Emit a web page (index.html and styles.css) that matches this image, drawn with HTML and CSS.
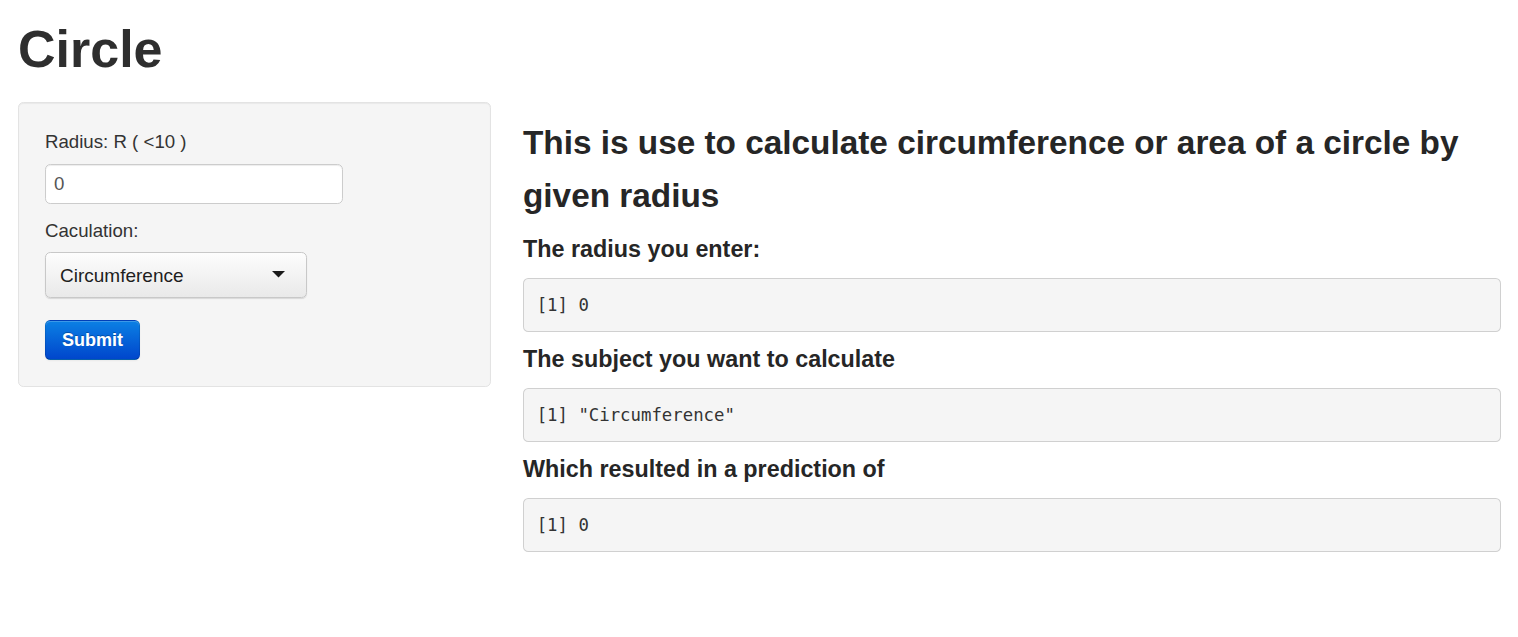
FILE: index.html
```html
<!DOCTYPE html>
<html lang="en">
<head>
<meta charset="utf-8">
<title>Circle</title>
<link rel="stylesheet" href="styles.css">
</head>
<body>
<div class="page">
  <header class="header">
    <h1 class="title">Circle</h1>
  </header>
  <div class="row">
    <form class="well">
      <label class="label" for="radius">Radius: R ( &lt;10 )</label>
      <input class="text-input" id="radius" type="text" value="0">
      <label class="label" for="calc">Caculation:</label>
      <div class="select-wrap">
        <select class="select" id="calc">
          <option>Circumference</option>
          <option>Area</option>
        </select>
        <svg class="caret" width="13" height="7" viewBox="0 0 13 7" aria-hidden="true"><polygon points="0,0 13,0 6.5,6.5" fill="#1a1a1a"/></svg>
      </div>
      <button class="btn-primary" type="button">Submit</button>
    </form>
    <main class="main">
      <h3 class="heading">This is use to calculate circumference or area of a circle by given radius</h3>
      <h4 class="subheading">The radius you enter:</h4>
      <pre class="output">[1] 0</pre>
      <h4 class="subheading">The subject you want to calculate</h4>
      <pre class="output">[1] "Circumference"</pre>
      <h4 class="subheading">Which resulted in a prediction of</h4>
      <pre class="output">[1] 0</pre>
    </main>
  </div>
</div>
</body>
</html>
```

FILE: styles.css
```css
html, body {
  margin: 0;
  padding: 0;
  background: #fff;
}

body {
  font-family: "Liberation Sans", Arial, sans-serif;
  font-size: 18.67px;
  line-height: 26.67px;
  color: #333;
}

.page {
  padding: 0 17px 0 18px;
}

.header {
  padding: 13px 0;
}

.title {
  margin: 10px 0 13px;
  font-size: 52px;
  line-height: 53.33px;
  font-weight: bold;
  color: #2e2e2e;
}

.row {
  display: grid;
  grid-template-columns: 473px 1fr;
  column-gap: 32px;
  align-items: start;
}

.well {
  margin: 0;
  padding: 25.5px 26px 26px 26px;
  background: #f5f5f5;
  border: 1px solid #e3e3e3;
  border-radius: 5.33px;
  box-shadow: inset 0 1px 1px rgba(0, 0, 0, 0.05);
}

.label {
  display: block;
  margin-bottom: 8px;
}

.text-input {
  display: block;
  box-sizing: border-box;
  width: 298px;
  height: 40px;
  margin: 0 0 14px;
  padding: 5.33px 8px;
  font-family: inherit;
  font-size: 18.67px;
  color: #555;
  background: #fff;
  border: 1px solid #ccc;
  border-radius: 5.33px;
  box-shadow: inset 0 1px 1px rgba(0, 0, 0, 0.075);
}

.select-wrap {
  position: relative;
  width: 262px;
  margin-bottom: 22px;
}

.select {
  -webkit-appearance: none;
  appearance: none;
  display: block;
  box-sizing: border-box;
  width: 100%;
  height: 46px;
  margin: 0;
  padding: 0 40px 0 14px;
  font-family: inherit;
  font-size: 19px;
  color: #1e1e1e;
  background: linear-gradient(to bottom, #fdfdfd, #e9e9e9);
  border: 1px solid #c8c8c8;
  border-radius: 5.33px;
  box-shadow: 0 1px 1px rgba(0, 0, 0, 0.12);
}

.caret {
  position: absolute;
  right: 22px;
  top: 19px;
  pointer-events: none;
}

.btn-primary {
  display: inline-block;
  box-sizing: border-box;
  height: 40px;
  padding: 0 16px;
  font-family: inherit;
  font-size: 18px;
  font-weight: bold;
  color: #fff;
  text-shadow: 0 -1px 0 rgba(0, 0, 0, 0.25);
  background: linear-gradient(to bottom, #0b80e4, #0046cc);
  border: 1px solid;
  border-color: rgba(0, 0, 0, 0.1) rgba(0, 0, 0, 0.1) rgba(0, 0, 0, 0.25);
  border-radius: 5.33px;
  box-shadow: inset 0 1px 0 rgba(255, 255, 255, 0.2), 0 1px 2px rgba(0, 0, 0, 0.05);
}

.main {
  min-width: 0;
}

.heading {
  margin: 13.33px 0;
  font-size: 33.33px;
  line-height: 53.33px;
  font-weight: bold;
  color: #262626;
}

.subheading {
  margin: 13.33px 0 16px;
  font-size: 23.33px;
  line-height: 26.67px;
  font-weight: bold;
  color: #262626;
}

.output {
  margin: 0 0 13.33px;
  padding: 13px 12.67px 12.33px;
  font-family: "DejaVu Sans Mono", "Liberation Mono", monospace;
  font-size: 17.33px;
  line-height: 26.67px;
  color: #333;
  background: #f5f5f5;
  border: 1px solid rgba(0, 0, 0, 0.15);
  border-radius: 5.33px;
  white-space: pre-wrap;
}
```
